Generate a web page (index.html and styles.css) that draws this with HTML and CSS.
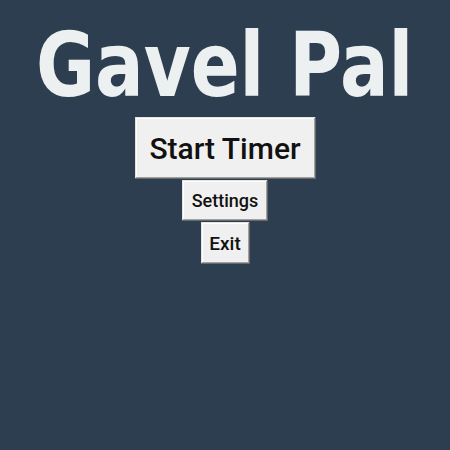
FILE: index.html
```html
<!DOCTYPE html>
<html>
<head>
<meta charset="utf-8">
<link rel="stylesheet" href="styles.css">
</head>
<body>
<main class="app">
  <h1 class="title">Gavel Pal</h1>
  <button class="btn btn-start">Start Timer</button>
  <button class="btn btn-settings">Settings</button>
  <button class="btn btn-exit">Exit</button>
</main>
</body>
</html>
```
FILE: styles.css
```css
html, body {
  margin: 0;
  padding: 0;
  background: #2c3e50;
  width: 450px;
  height: 450px;
  overflow: hidden;
}
.app {
  display: flex;
  flex-direction: column;
  align-items: center;
  font-family: "DejaVu Sans Condensed", "DejaVu Sans", sans-serif;
}
.title {
  margin: 14px 0 0 0;
  height: 103px;
  font-size: 89px;
  line-height: 103px;
  font-weight: bold;
  color: #ecf0f1;
  white-space: nowrap;
  transform: scaleX(0.9);
}
.btn {
  box-sizing: border-box;
  margin: 0;
  padding: 0;
  background: #f0f0f0;
  color: #111;
  font-family: Roboto, "DejaVu Sans", sans-serif;
  font-weight: 500;
  border: none;
  box-shadow: inset -1px -1px 0 #696969, inset 1px 1px 0 #e3e3e3, inset -2px -2px 0 #a0a0a0, inset 2px 2px 0 #ffffff;
  display: flex;
  align-items: center;
  justify-content: center;
}
.btn-start {
  width: 181px;
  height: 62px;
  font-size: 30px;
}
.btn-settings {
  margin-top: 1px;
  width: 86px;
  height: 41px;
  font-size: 18px;
}
.btn-exit {
  margin-top: 1px;
  width: 49px;
  height: 42px;
  font-size: 19px;
}
```
